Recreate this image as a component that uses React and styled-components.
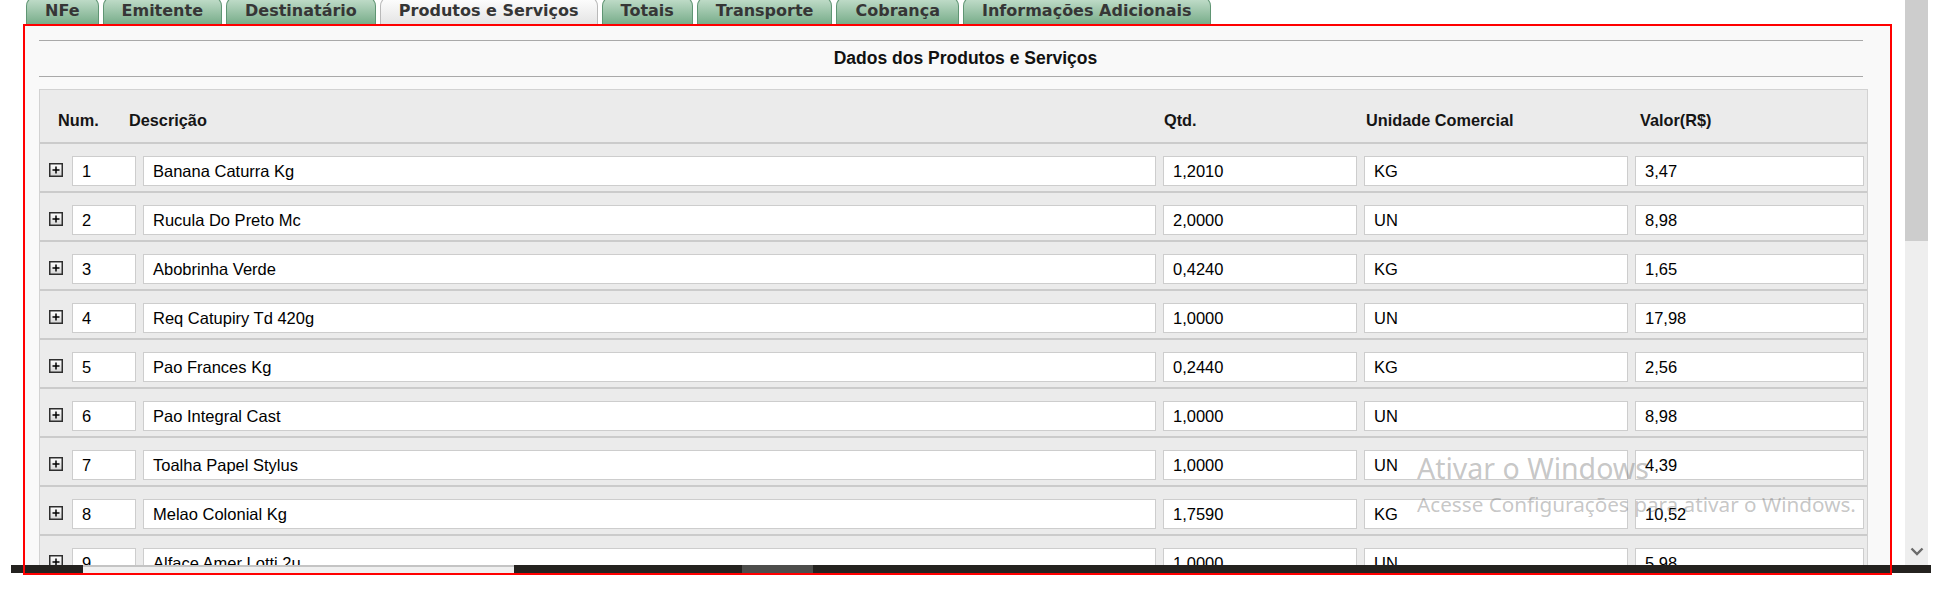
import React from 'react'
import styled, { createGlobalStyle } from 'styled-components'

const GlobalStyle = createGlobalStyle`
    html, body {
        margin: 0;
        padding: 0;
        background: #fff;
    }
    body {
        font-family: "Liberation Sans", Arial, sans-serif;
    }
`

const tabs = [
    { label: 'NFe' },
    { label: 'Emitente' },
    { label: 'Destinatário' },
    { label: 'Produtos e Serviços', active: true },
    { label: 'Totais' },
    { label: 'Transporte' },
    { label: 'Cobrança' },
    { label: 'Informações Adicionais' },
]

const produtos = [
    ['1', 'Banana Caturra Kg', '1,2010', 'KG', '3,47'],
    ['2', 'Rucula Do Preto Mc', '2,0000', 'UN', '8,98'],
    ['3', 'Abobrinha Verde', '0,4240', 'KG', '1,65'],
    ['4', 'Req Catupiry Td 420g', '1,0000', 'UN', '17,98'],
    ['5', 'Pao Frances Kg', '0,2440', 'KG', '2,56'],
    ['6', 'Pao Integral Cast', '1,0000', 'UN', '8,98'],
    ['7', 'Toalha Papel Stylus', '1,0000', 'UN', '4,39'],
    ['8', 'Melao Colonial Kg', '1,7590', 'KG', '10,52'],
    ['9', 'Alface Amer Lotti 2u', '1,0000', 'UN', '5,98'],
]

const ExpandIcon = () => (
    <svg width="14" height="14" viewBox="0 0 14 14">
        <defs>
            <linearGradient id="exp" x1="0" y1="0" x2="0" y2="1">
                <stop offset="0" stopColor="#ffffff" />
                <stop offset="1" stopColor="#d6d6d6" />
            </linearGradient>
        </defs>
        <rect x="0.75" y="0.75" width="12.5" height="12.5" fill="url(#exp)" stroke="#2e2e2e" strokeWidth="1.5" />
        <path d="M3.5 7h7M7 3.5v7" stroke="#000" strokeWidth="1.5" />
    </svg>
)

const App = () => {
    return (
        <>
            <GlobalStyle />
            <Page>
                <Main>
                    <TabBar>
                        {tabs.map(t => (
                            <Tab key={t.label} $active={t.active}>{t.label}</Tab>
                        ))}
                    </TabBar>
                    <Panel>
                        <SectionTitle>Dados dos Produtos e Serviços</SectionTitle>
                        <TableBox>
                            <HeaderRow>
                                <HeadCell>Num.</HeadCell>
                                <HeadCell>Descrição</HeadCell>
                                <HeadCell>Qtd.</HeadCell>
                                <HeadCell>Unidade Comercial</HeadCell>
                                <HeadCell>Valor(R$)</HeadCell>
                            </HeaderRow>
                            {produtos.map(p => (
                                <ItemRow key={p[0]}>
                                    <ExpandButton><ExpandIcon /></ExpandButton>
                                    {p.map((v, i) => (
                                        <Field key={i}>{v}</Field>
                                    ))}
                                </ItemRow>
                            ))}
                        </TableBox>
                    </Panel>
                </Main>
                <Scrollbar>
                    <Thumb />
                    <Track>
                        <svg width="14" height="9" viewBox="0 0 14 9">
                            <path d="M1.5 1.5l5.5 5.5 5.5-5.5" fill="none" stroke="#6b6b6b" strokeWidth="2.4" />
                        </svg>
                    </Track>
                </Scrollbar>
                <Taskbar>
                    <TaskSegment $w={72} />
                    <TaskSegment $w={431} $light />
                    <TaskSegment $w={228} />
                    <TaskSegment $w={71} $mid />
                    <TaskSegment $flex />
                </Taskbar>
                <Watermark>
                    <WatermarkTitle>Ativar o Windows</WatermarkTitle>
                    <WatermarkText>Acesse Configurações para ativar o Windows.</WatermarkText>
                </Watermark>
            </Page>
        </>
    )
}

const Page = styled.div`
    position: relative;
    width: 1942px;
    height: 601px;
    overflow: hidden;
    display: flex;
    align-items: flex-start;
    background: #fff;
`
const Main = styled.div`
    width: 1905px;
    display: flex;
    flex-direction: column;
`
const TabBar = styled.div`
    height: 24px;
    display: flex;
    align-items: flex-end;
    gap: 4px;
    padding-left: 26px;
    overflow: hidden;
`
const Tab = styled.div`
    height: 27px;
    line-height: 27px;
    padding: 0 18px;
    border: 1px solid ${p => p.$active ? '#b9b9b9' : '#5f9573'};
    border-bottom: none;
    border-radius: 10px 10px 0 0;
    background: ${p => p.$active
        ? 'linear-gradient(to bottom, #ffffff, #e4e4e4)'
        : 'linear-gradient(to bottom, #c6e0ce, #78ad8a)'};
    color: #363636;
    font-family: "DejaVu Sans", Verdana, sans-serif;
    font-weight: bold;
    font-size: 16px;
    white-space: nowrap;
`
const Panel = styled.div`
    position: relative;
    margin-left: 23px;
    width: 1869px;
    height: 551px;
    box-sizing: border-box;
    padding: 16px 24px 0 16px;
    background: #f9f9f9;
    overflow: hidden;

    &::after {
        content: '';
        position: absolute;
        inset: 0;
        border: 2px solid #ff0000;
        z-index: 3;
        pointer-events: none;
    }
`
const SectionTitle = styled.div`
    height: 35px;
    margin-right: 5px;
    padding-left: 29px;
    border-top: 1px solid #a9a9a9;
    border-bottom: 1px solid #a9a9a9;
    display: flex;
    align-items: center;
    justify-content: center;
    font-size: 17.5px;
    font-weight: bold;
    color: #111;
`
const TableBox = styled.div`
    margin-top: 12px;
    border: 1px solid #d2d2d2;
    background: #ebebeb;
`
const HeaderRow = styled.div`
    display: grid;
    grid-template-columns: 71px 1035px 202px 274px 1fr;
    padding: 20px 0 12px 18px;
    line-height: 20px;
`
const HeadCell = styled.div`
    font-size: 16.3px;
    font-weight: bold;
    color: #151515;
    white-space: nowrap;
`
const ItemRow = styled.div`
    display: grid;
    grid-template-columns: 15px 64px 1fr 194px 264px 229px;
    column-gap: 7px;
    align-items: center;
    padding: 12px 3px 5px 10px;
    border-top: 2px solid #cbcbcb;
`
const ExpandButton = styled.div`
    width: 14px;
    height: 14px;
    display: flex;
    margin: -2px 0 0 -1px;
`
const Field = styled.div`
    height: 30px;
    box-sizing: border-box;
    padding: 0 9px;
    border: 1px solid #cdcdcd;
    background: #fff;
    display: flex;
    align-items: center;
    font-size: 16.5px;
    color: #000;
    white-space: nowrap;
`
const Scrollbar = styled.div`
    width: 23px;
    height: 565px;
    display: flex;
    flex-direction: column;
    background: #eeeeee;
`
const Thumb = styled.div`
    height: 241px;
    background: #cdcdcd;
`
const Track = styled.div`
    flex: 1;
    display: flex;
    align-items: flex-end;
    justify-content: center;
    padding-bottom: 9px;
`
const Taskbar = styled.div`
    position: absolute;
    left: 11px;
    top: 565px;
    width: 1920px;
    height: 8px;
    display: flex;
    z-index: 2;
`
const TaskSegment = styled.div`
    width: ${p => p.$flex ? 'auto' : `${p.$w}px`};
    flex: ${p => p.$flex ? 1 : 'none'};
    background: ${p => p.$light ? '#efefef' : p.$mid ? '#4d4d4b' : '#24221f'};
    border-top: ${p => p.$light ? '2px solid #c4c4c4' : 'none'};
`
const Watermark = styled.div`
    position: absolute;
    left: 1417px;
    top: 448px;
    z-index: 1;
    font-family: "Noto Sans", "Open Sans", sans-serif;
    color: rgba(110, 110, 110, 0.4);
    pointer-events: none;
`
const WatermarkTitle = styled.div`
    font-size: 28.5px;
    line-height: 40px;
`
const WatermarkText = styled.div`
    font-size: 20.7px;
    line-height: 30px;
    margin-top: 1px;
`

export default App
